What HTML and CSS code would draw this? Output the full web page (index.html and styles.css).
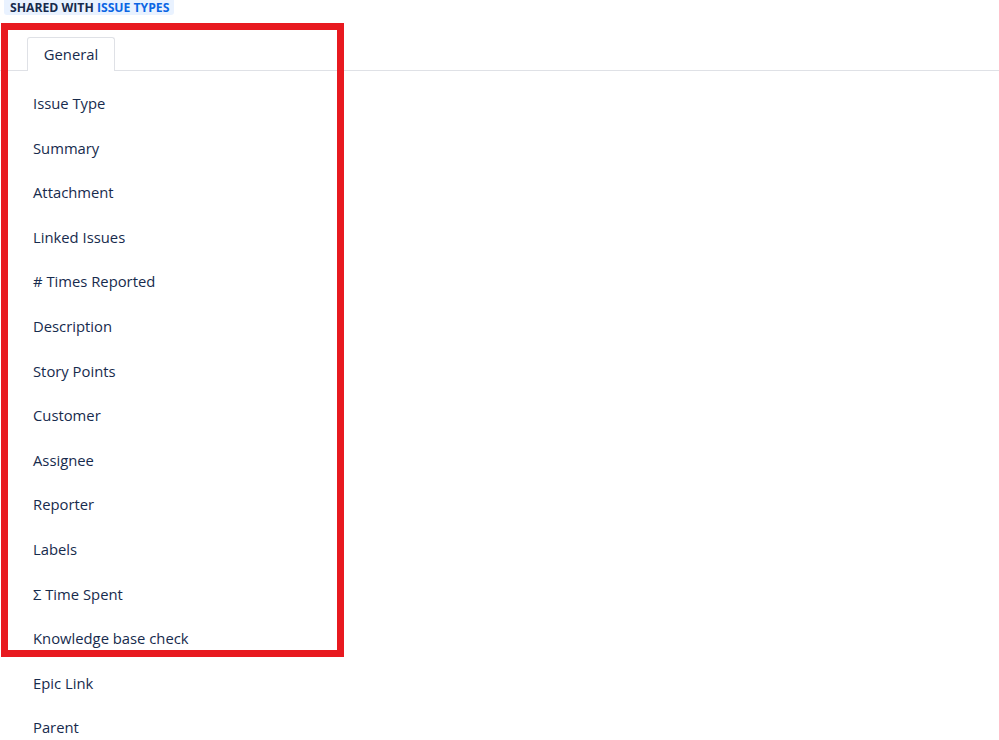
FILE: index.html
```html
<!DOCTYPE html>
<html>
<head>
<meta charset="utf-8">
<link rel="stylesheet" href="styles.css">
</head>
<body>
<div class="page">
  <div class="header"><div class="badge"><span class="dark">SHARED WITH</span> <span class="blue">ISSUE TYPES</span></div></div>
  <div class="tabs"><div class="tab">General</div></div>
  <ul class="fields">
    <li>Issue Type</li>
    <li>Summary</li>
    <li>Attachment</li>
    <li>Linked Issues</li>
    <li># Times Reported</li>
    <li>Description</li>
    <li>Story Points</li>
    <li>Customer</li>
    <li>Assignee</li>
    <li>Reporter</li>
    <li>Labels</li>
    <li>Σ Time Spent</li>
    <li>Knowledge base check</li>
    <li>Epic Link</li>
    <li>Parent</li>
  </ul>
  <div class="highlight"></div>
</div>
</body>
</html>
```
FILE: styles.css
```css
html, body { margin: 0; padding: 0; background: #fff; }
body { font-family: "Open Sans", "Noto Sans", sans-serif; color: #172b4d; }
.page { position: relative; width: 999px; height: 740px; overflow: hidden; }
.header { height: 15px; display: flex; padding-left: 4px; }
.badge {
  padding: 0 5px 0 6px;
  background: #e9f2ff;
  border-radius: 0 0 3px 3px;
  font-size: 12.2px;
  font-weight: 700;
  line-height: 15px;
  height: 15px;
  white-space: nowrap;
}
.badge .dark { color: #172b4d; }
.badge .blue { color: #0c66e4; }
.tabs {
  margin-top: 21px;
  height: 34px;
  border-bottom: 1px solid #dfe1e6;
  padding-left: 27px;
  display: flex;
  align-items: flex-end;
}
.tab {
  width: 88px;
  height: 34px;
  border: 1px solid #dfe1e6;
  border-bottom: none;
  border-radius: 3px 3px 0 0;
  box-sizing: border-box;
  margin-bottom: -1px;
  background: #fff;
  font-size: 14.8px;
  line-height: 32px;
  text-align: center;
  color: #172b4d;
}
.fields { list-style: none; margin: 0; padding: 10px 0 0 33px; }
.fields li { font-size: 14.8px; line-height: 44.6px; height: 44.6px; white-space: nowrap; }
.highlight {
  position: absolute;
  left: 1px; top: 23px;
  width: 343px; height: 634px;
  box-sizing: border-box;
  border: 7px solid #e8191f;
}
```
